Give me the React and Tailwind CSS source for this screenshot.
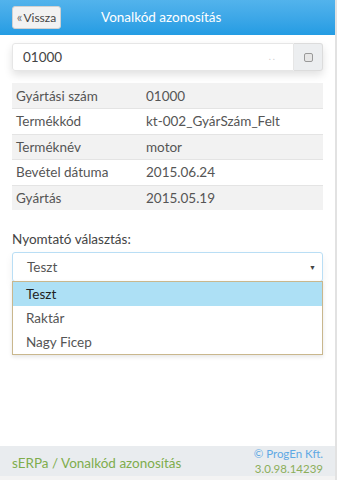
const rows = [
  ["Gyártási szám", "01000"],
  ["Termékkód", "kt-002_GyárSzám_Felt"],
  ["Terméknév", "motor"],
  ["Bevétel dátuma", "2015.06.24"],
  ["Gyártás", "2015.05.19"],
];

const options = ["Teszt", "Raktár", "Nagy Ficep"];

function App() {
  return (
    <div
      className="w-[337px] h-[480px] flex flex-col bg-white border-r-2 border-[#e2e2e2] text-[#333] text-[13.5px]"
      style={{ fontFamily: 'Lato, "Open Sans", sans-serif' }}
    >
      {/* header */}
      <div className="h-[35px] shrink-0 flex items-center px-3 bg-gradient-to-b from-[#52b3ec] to-[#239ce3]">
        <button className="h-[23px] w-[49px] flex items-center justify-center rounded-[3px] bg-[#f2f2f2] border border-[#d0d0d0] text-[12px] text-[#444]">
          <span className="text-[13px] leading-none text-[#777] mr-[1px] -mt-[1px]">«</span>
          <span>Vissza</span>
        </button>
        <span className="ml-[40px] text-white text-[13.5px]">Vonalkód azonosítás</span>
      </div>

      <div className="flex-1 px-3 pt-2">
        {/* search */}
        <div className="flex h-[28px] shadow-[0_4px_8px_rgba(0,0,0,0.12)] rounded-[3px]">
          <div className="flex-1 flex items-center justify-between pl-2.5 pr-4 bg-white border border-[#e6e6e6] rounded-l-[3px]">
            <span className="text-[#444]">01000</span>
            <span className="text-[9px] text-[#ccc] tracking-[2px]">..</span>
          </div>
          <div className="w-[29px] flex items-center justify-center bg-[#eceef0] border border-l-0 border-[#dcdcdc] rounded-r-[3px]">
            <span className="w-[9px] h-[9px] rounded-[2px] border border-[#999] bg-[#e6e6e6]" />
          </div>
        </div>

        {/* data table */}
        <div className="mt-[12px]">
          {rows.map(([k, v], i) => (
            <div
              key={k}
              className={`flex h-[25.4px] items-center px-1 ${i % 2 === 0 ? "bg-[#f2f2f2]" : "bg-white"} ${i > 0 ? "border-t border-[#e4e4e4]" : ""}`}
            >
              <span className="w-[130px] text-[#555]">{k}</span>
              <span className="text-[#555]">{v}</span>
            </div>
          ))}
        </div>

        {/* printer select */}
        <div className="mt-[19px] text-[#444]">Nyomtató választás:</div>
        <div className="relative mt-[3px]">
          <div className="h-[30px] flex items-center justify-between pl-3.5 pr-1.5 border border-[#b9def5] rounded-[3px] bg-white shadow-[0_4px_8px_rgba(0,0,0,0.06)]">
            <span className="text-[#555]">Teszt</span>
            <span className="text-[7px] text-[#444]">▼</span>
          </div>
          <div className="mt-[12px] h-[30px] rounded-[3px] bg-[#2d9fe3]" />
          <div className="absolute left-0 right-0 top-[29px] bg-white border border-[#c9b78d] shadow-[0_2px_4px_rgba(0,0,0,0.1)]">
            {options.map((o, i) => (
              <div
                key={o}
                className={`h-[24px] flex items-center pl-[13px] ${i === 0 ? "bg-[#ade0f5] text-[#222]" : "text-[#555]"}`}
              >
                {o}
              </div>
            ))}
          </div>
        </div>
      </div>

      {/* footer */}
      <div className="h-[34px] shrink-0 flex items-center justify-between px-3 bg-[#e9ecef] border-b-4 border-[#f3f3f3]">
        <span className="text-[#7fad4d] mt-[4px]">sERPa / Vonalkód azonosítás</span>
        <div className="flex flex-col items-end leading-[15px] text-[11.5px]">
          <span className="text-[#5fa9e4]">© ProgEn Kft.</span>
          <span className="text-[#8cae5a]">3.0.98.14239</span>
        </div>
      </div>
    </div>
  );
}

export default App;
